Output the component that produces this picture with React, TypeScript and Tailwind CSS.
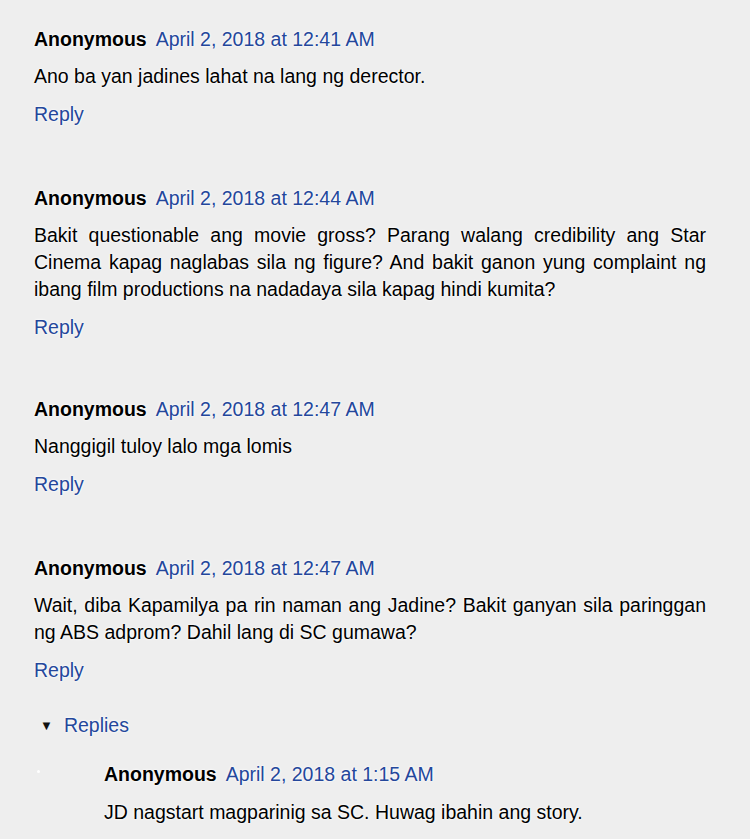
import React from 'react';

type Comment = {
  author: string;
  date: string;
  body: string;
  gap: string;
};

const comments: Comment[] = [
  {
    author: 'Anonymous',
    date: 'April 2, 2018 at 12:41 AM',
    body: 'Ano ba yan jadines lahat na lang ng derector.',
    gap: 'mb-[57px]',
  },
  {
    author: 'Anonymous',
    date: 'April 2, 2018 at 12:44 AM',
    body: 'Bakit questionable ang movie gross? Parang walang credibility ang Star Cinema kapag naglabas sila ng figure? And bakit ganon yung complaint ng ibang film productions na nadadaya sila kapag hindi kumita?',
    gap: 'mb-[55px]',
  },
  {
    author: 'Anonymous',
    date: 'April 2, 2018 at 12:47 AM',
    body: 'Nanggigil tuloy lalo mga lomis',
    gap: 'mb-[57px]',
  },
  {
    author: 'Anonymous',
    date: 'April 2, 2018 at 12:47 AM',
    body: 'Wait, diba Kapamilya pa rin naman ang Jadine? Bakit ganyan sila paringgan ng ABS adprom? Dahil lang di SC gumawa?',
    gap: '',
  },
];

const halo = '[text-shadow:0_0_2px_#fff,0_0_3px_#fff]';

function Header({ author, date }: { author: string; date: string }) {
  return (
    <div className={`flex items-baseline gap-[9px] leading-[27px] ${halo}`}>
      <span className="font-bold text-black">{author}</span>
      <a href="#" className="text-[#24479b]">{date}</a>
    </div>
  );
}

function CommentBlock({ c }: { c: Comment }) {
  return (
    <div className={c.gap}>
      <Header author={c.author} date={c.date} />
      <p className={`mt-[10px] text-justify leading-[27px] text-black ${halo}`}>{c.body}</p>
      <a href="#" className={`mt-[11px] block leading-[27px] text-[#24479b] ${halo}`}>
        Reply
      </a>
    </div>
  );
}

export default function App() {
  return (
    <div
      className="min-h-[839px] bg-[#eeeeee] pl-[34px] pr-[44px] pt-[26px] text-[19.5px]"
      style={{ fontFamily: '"Liberation Sans", Arial, sans-serif' }}
    >
      {comments.map((c, i) => (
        <CommentBlock key={i} c={c} />
      ))}

      <div className="mt-[28px] flex items-center gap-[11px] pl-[6px] leading-[27px]">
        <span className="text-[13px] text-[#111]">▼</span>
        <a href="#" className={`text-[#24479b] ${halo}`}>Replies</a>
      </div>

      <div className="relative mt-[22px] pl-[70px]">
        <span className="absolute left-[3px] top-[9px] h-[3px] w-[3px] rounded-full bg-white" />
        <Header author="Anonymous" date="April 2, 2018 at 1:15 AM" />
        <p className={`mt-[11px] leading-[27px] text-black ${halo}`}>
          JD nagstart magparinig sa SC. Huwag ibahin ang story.
        </p>
      </div>
    </div>
  );
}
